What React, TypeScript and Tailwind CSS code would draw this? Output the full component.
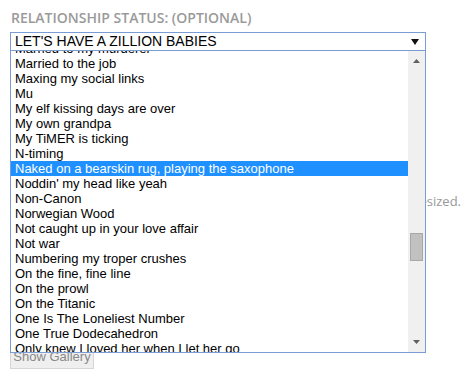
import React from "react";

const items = [
  "Married to my murderer",
  "Married to the job",
  "Maxing my social links",
  "Mu",
  "My elf kissing days are over",
  "My own grandpa",
  "My TiMER is ticking",
  "N-timing",
  "Naked on a bearskin rug, playing the saxophone",
  "Noddin' my head like yeah",
  "Non-Canon",
  "Norwegian Wood",
  "Not caught up in your love affair",
  "Not war",
  "Numbering my troper crushes",
  "On the fine, fine line",
  "On the prowl",
  "On the Titanic",
  "One Is The Loneliest Number",
  "One True Dodecahedron",
  "Only knew I loved her when I let her go",
];

export default function App() {
  return (
    <div className="relative w-[475px] h-[374px] overflow-hidden bg-white pl-[10px] pt-[8px]">
      <div
        className="pl-[1px] text-[14px] leading-[19px] font-semibold text-[#9a9a9a]"
        style={{ fontFamily: '"Open Sans", sans-serif' }}
      >
        RELATIONSHIP STATUS: (OPTIONAL)
      </div>

      <div className="relative mt-[5px] w-[416px]">
        <div
          className="flex h-[19px] items-center justify-between border border-[#7a9cd3] pl-[4px] pr-[6px] text-[14px] text-black"
          style={{ fontFamily: '"Liberation Sans", Arial, sans-serif' }}
        >
          <span className="leading-[17px]">LET'S HAVE A ZILLION BABIES</span>
          <svg width="8" height="6" viewBox="0 0 8 6">
            <path d="M0 0 H8 L4 6 Z" fill="#111" />
          </svg>
        </div>

        <div
          className="absolute left-0 top-[18px] z-10 flex h-[303px] w-[416px] border border-[#7a9cd3] bg-white"
          style={{ fontFamily: '"Liberation Sans", Arial, sans-serif' }}
        >
          <div className="flex-1 overflow-hidden">
            <div className="mt-[-10px] flex flex-col">
              {items.map((t, i) => (
                <div
                  key={i}
                  className={
                    i === 8
                      ? "h-[15px] whitespace-nowrap bg-[#1e90ff] pl-[4px] text-[13px] leading-[15px] text-white"
                      : "h-[15px] whitespace-nowrap pl-[4px] text-[13px] leading-[15px] text-black"
                  }
                >
                  {t}
                </div>
              ))}
            </div>
          </div>
          <div className="flex w-[17px] flex-col bg-[#f0f0f0]">
            <div className="flex h-[20px] items-center justify-center">
              <svg width="7" height="4" viewBox="0 0 7 4">
                <path d="M3.5 0 L7 4 H0 Z" fill="#606060" />
              </svg>
            </div>
            <div className="flex-1">
              <div className="ml-[2px] mt-[162px] h-[28px] w-[13px] border border-[#a8a8a8] bg-[#c1c1c1]" />
            </div>
            <div className="flex h-[20px] items-center justify-center">
              <svg width="7" height="4" viewBox="0 0 7 4">
                <path d="M0 0 H7 L3.5 4 Z" fill="#606060" />
              </svg>
            </div>
          </div>
        </div>
      </div>

      <div
        className="mt-[141px] w-[451px] whitespace-nowrap text-right text-[13px] leading-[18px] text-[#999]"
        style={{ fontFamily: '"Open Sans", sans-serif' }}
      >
        Uploaded images will be resized.
      </div>

      <button
        className="mt-[135px] flex h-[24px] w-[84px] items-center justify-center border border-[#d6d6d6] bg-[#efefef] text-[13px] text-[#888]"
        style={{ fontFamily: '"Liberation Sans", Arial, sans-serif' }}
      >
        Show Gallery
      </button>
    </div>
  );
}
